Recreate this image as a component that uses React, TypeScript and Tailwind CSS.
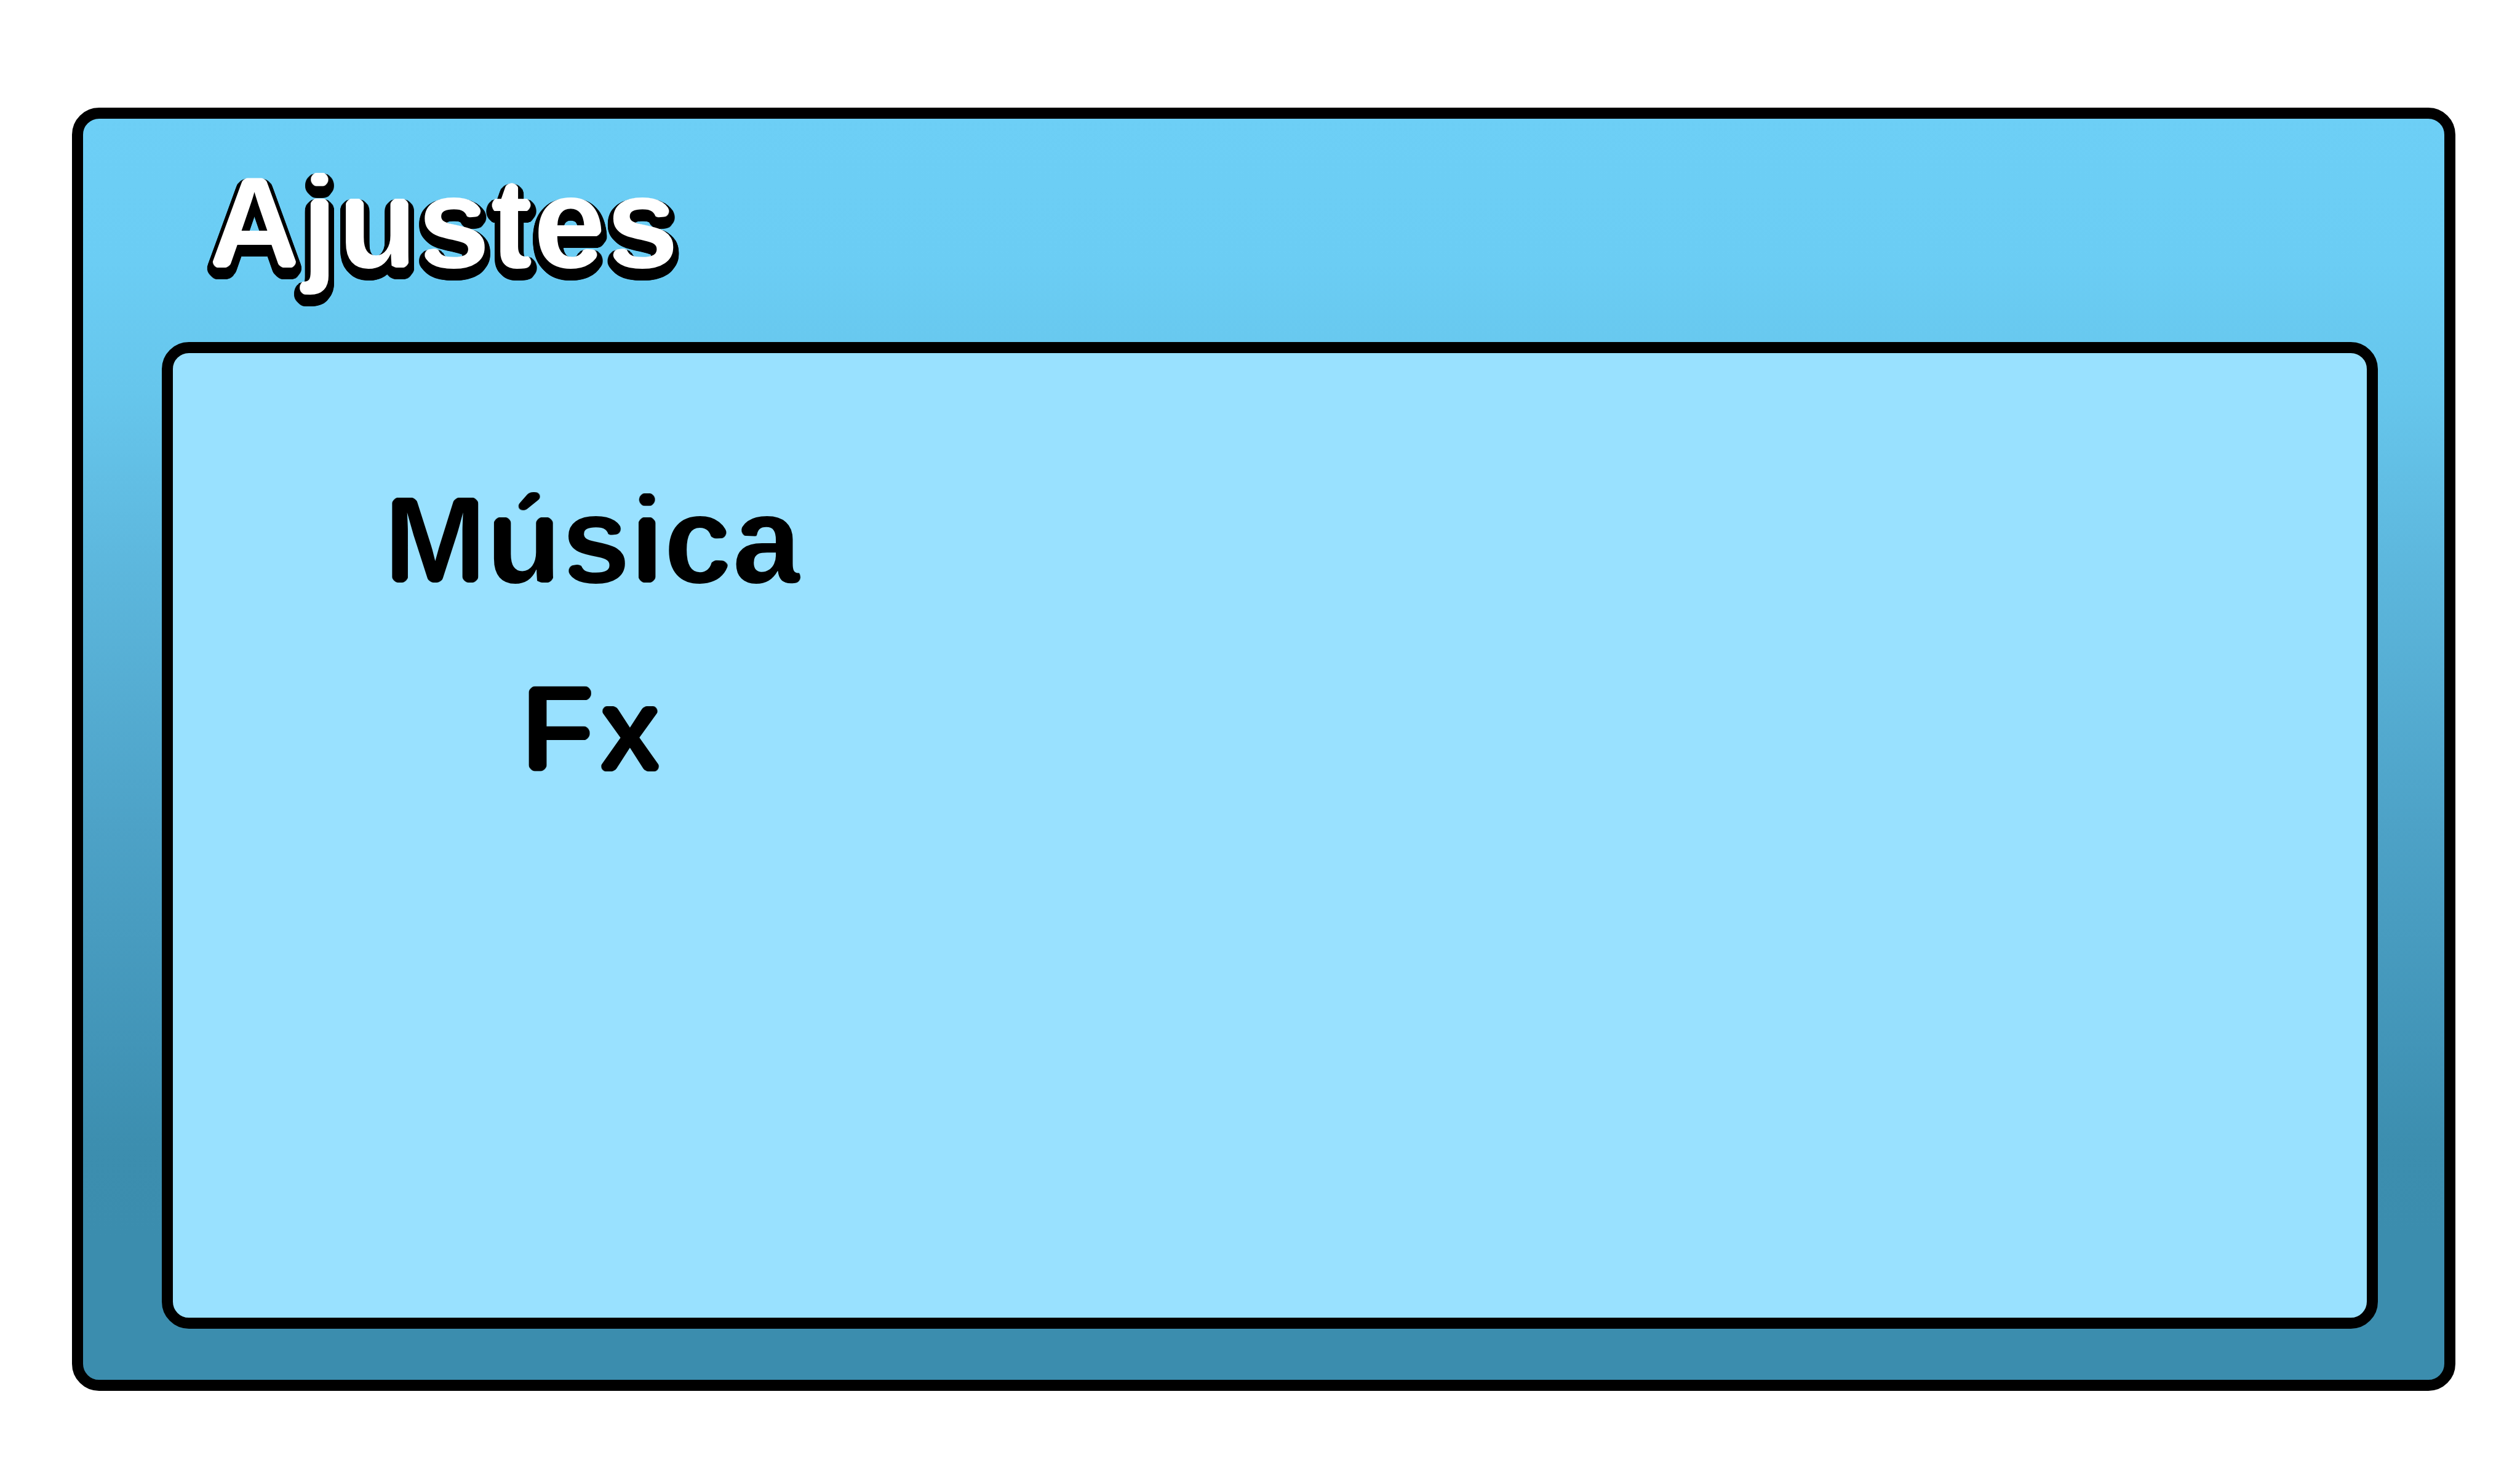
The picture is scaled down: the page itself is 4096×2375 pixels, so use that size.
const ROUNDED = '[font-family:"Liberation_Sans",Arial,sans-serif] font-bold';

const OUTLINE_RADIUS = 9;
const OUTLINE_DROP = 10;
const OUTLINE_STEPS = Array.from({ length: 24 }, (_, i) => {
  const angle = (i / 24) * Math.PI * 2;
  return {
    id: `step${i}`,
    dx: Math.round(Math.cos(angle) * OUTLINE_RADIUS),
    dy: Math.round(Math.sin(angle) * OUTLINE_RADIUS) + OUTLINE_DROP,
  };
});

/** Filters that round the outer letter corners, and add the dropped black outline of the title. */
function LetterFilters() {
  return (
    <svg className="absolute size-0" aria-hidden="true">
      <defs>
        <filter id="rounded" x="-10%" y="-10%" width="120%" height="120%" colorInterpolationFilters="sRGB">
          <feGaussianBlur in="SourceAlpha" stdDeviation="9" />
          <feComponentTransfer result="soft">
            <feFuncA type="linear" slope="20" intercept="-7.6" />
          </feComponentTransfer>
          <feComposite in="SourceGraphic" in2="soft" operator="in" />
        </filter>
        <filter id="rounded-outline" x="-10%" y="-10%" width="120%" height="120%" colorInterpolationFilters="sRGB">
          <feGaussianBlur in="SourceAlpha" stdDeviation="9" />
          <feComponentTransfer result="soft">
            <feFuncA type="linear" slope="20" intercept="-7.6" />
          </feComponentTransfer>
          <feComposite in="SourceAlpha" in2="soft" operator="in" result="letters" />
          {OUTLINE_STEPS.map((s) => (
            <feOffset key={s.id} in="letters" dx={s.dx} dy={s.dy} result={s.id} />
          ))}
          <feMerge result="outline">
            {OUTLINE_STEPS.map((s) => (
              <feMergeNode key={s.id} in={s.id} />
            ))}
          </feMerge>
          <feFlood floodColor="#ffffff" />
          <feComposite in2="letters" operator="in" result="face" />
          <feMerge>
            <feMergeNode in="outline" />
            <feMergeNode in="face" />
          </feMerge>
        </filter>
      </defs>
    </svg>
  );
}

const SETTINGS = ["Música", "Fx"];

export default function App() {
  return (
    <div className="flex min-h-screen flex-col bg-white pt-[175px] pr-[105px] pb-[114px] pl-[117px]">
      <LetterFilters />
      <main className="flex flex-1 flex-col rounded-[44px] border-[18px] border-black bg-[linear-gradient(to_bottom,#6dcff6_0%,#6bcdf4_12%,#66c6ec_22%,#5eb9df_34%,#4da2c7_56%,#4295b8_73%,#3c8eaf_81%,#3b8dae_88%,#3b8dae_100%)] bg-origin-border pr-[108px] pb-[83px] pl-[128px]">
        <header className="flex h-[363px] items-center pb-[26px] pl-[74px]">
          <h1
            className={`${ROUNDED} text-[212px] leading-none text-white [filter:url(#rounded-outline)]`}
          >
            Ajustes
          </h1>
        </header>
        <section className="flex-1 rounded-[44px] border-[18px] border-black bg-[#99e1ff] pt-[150px] pl-[332px]">
          <ul className="w-[700px] text-center">
            {SETTINGS.map((name) => (
              <li
                key={name}
                className={`${ROUNDED} text-[200px] leading-[307px] text-black [filter:url(#rounded)]`}
              >
                {name}
              </li>
            ))}
          </ul>
        </section>
      </main>
    </div>
  );
}
